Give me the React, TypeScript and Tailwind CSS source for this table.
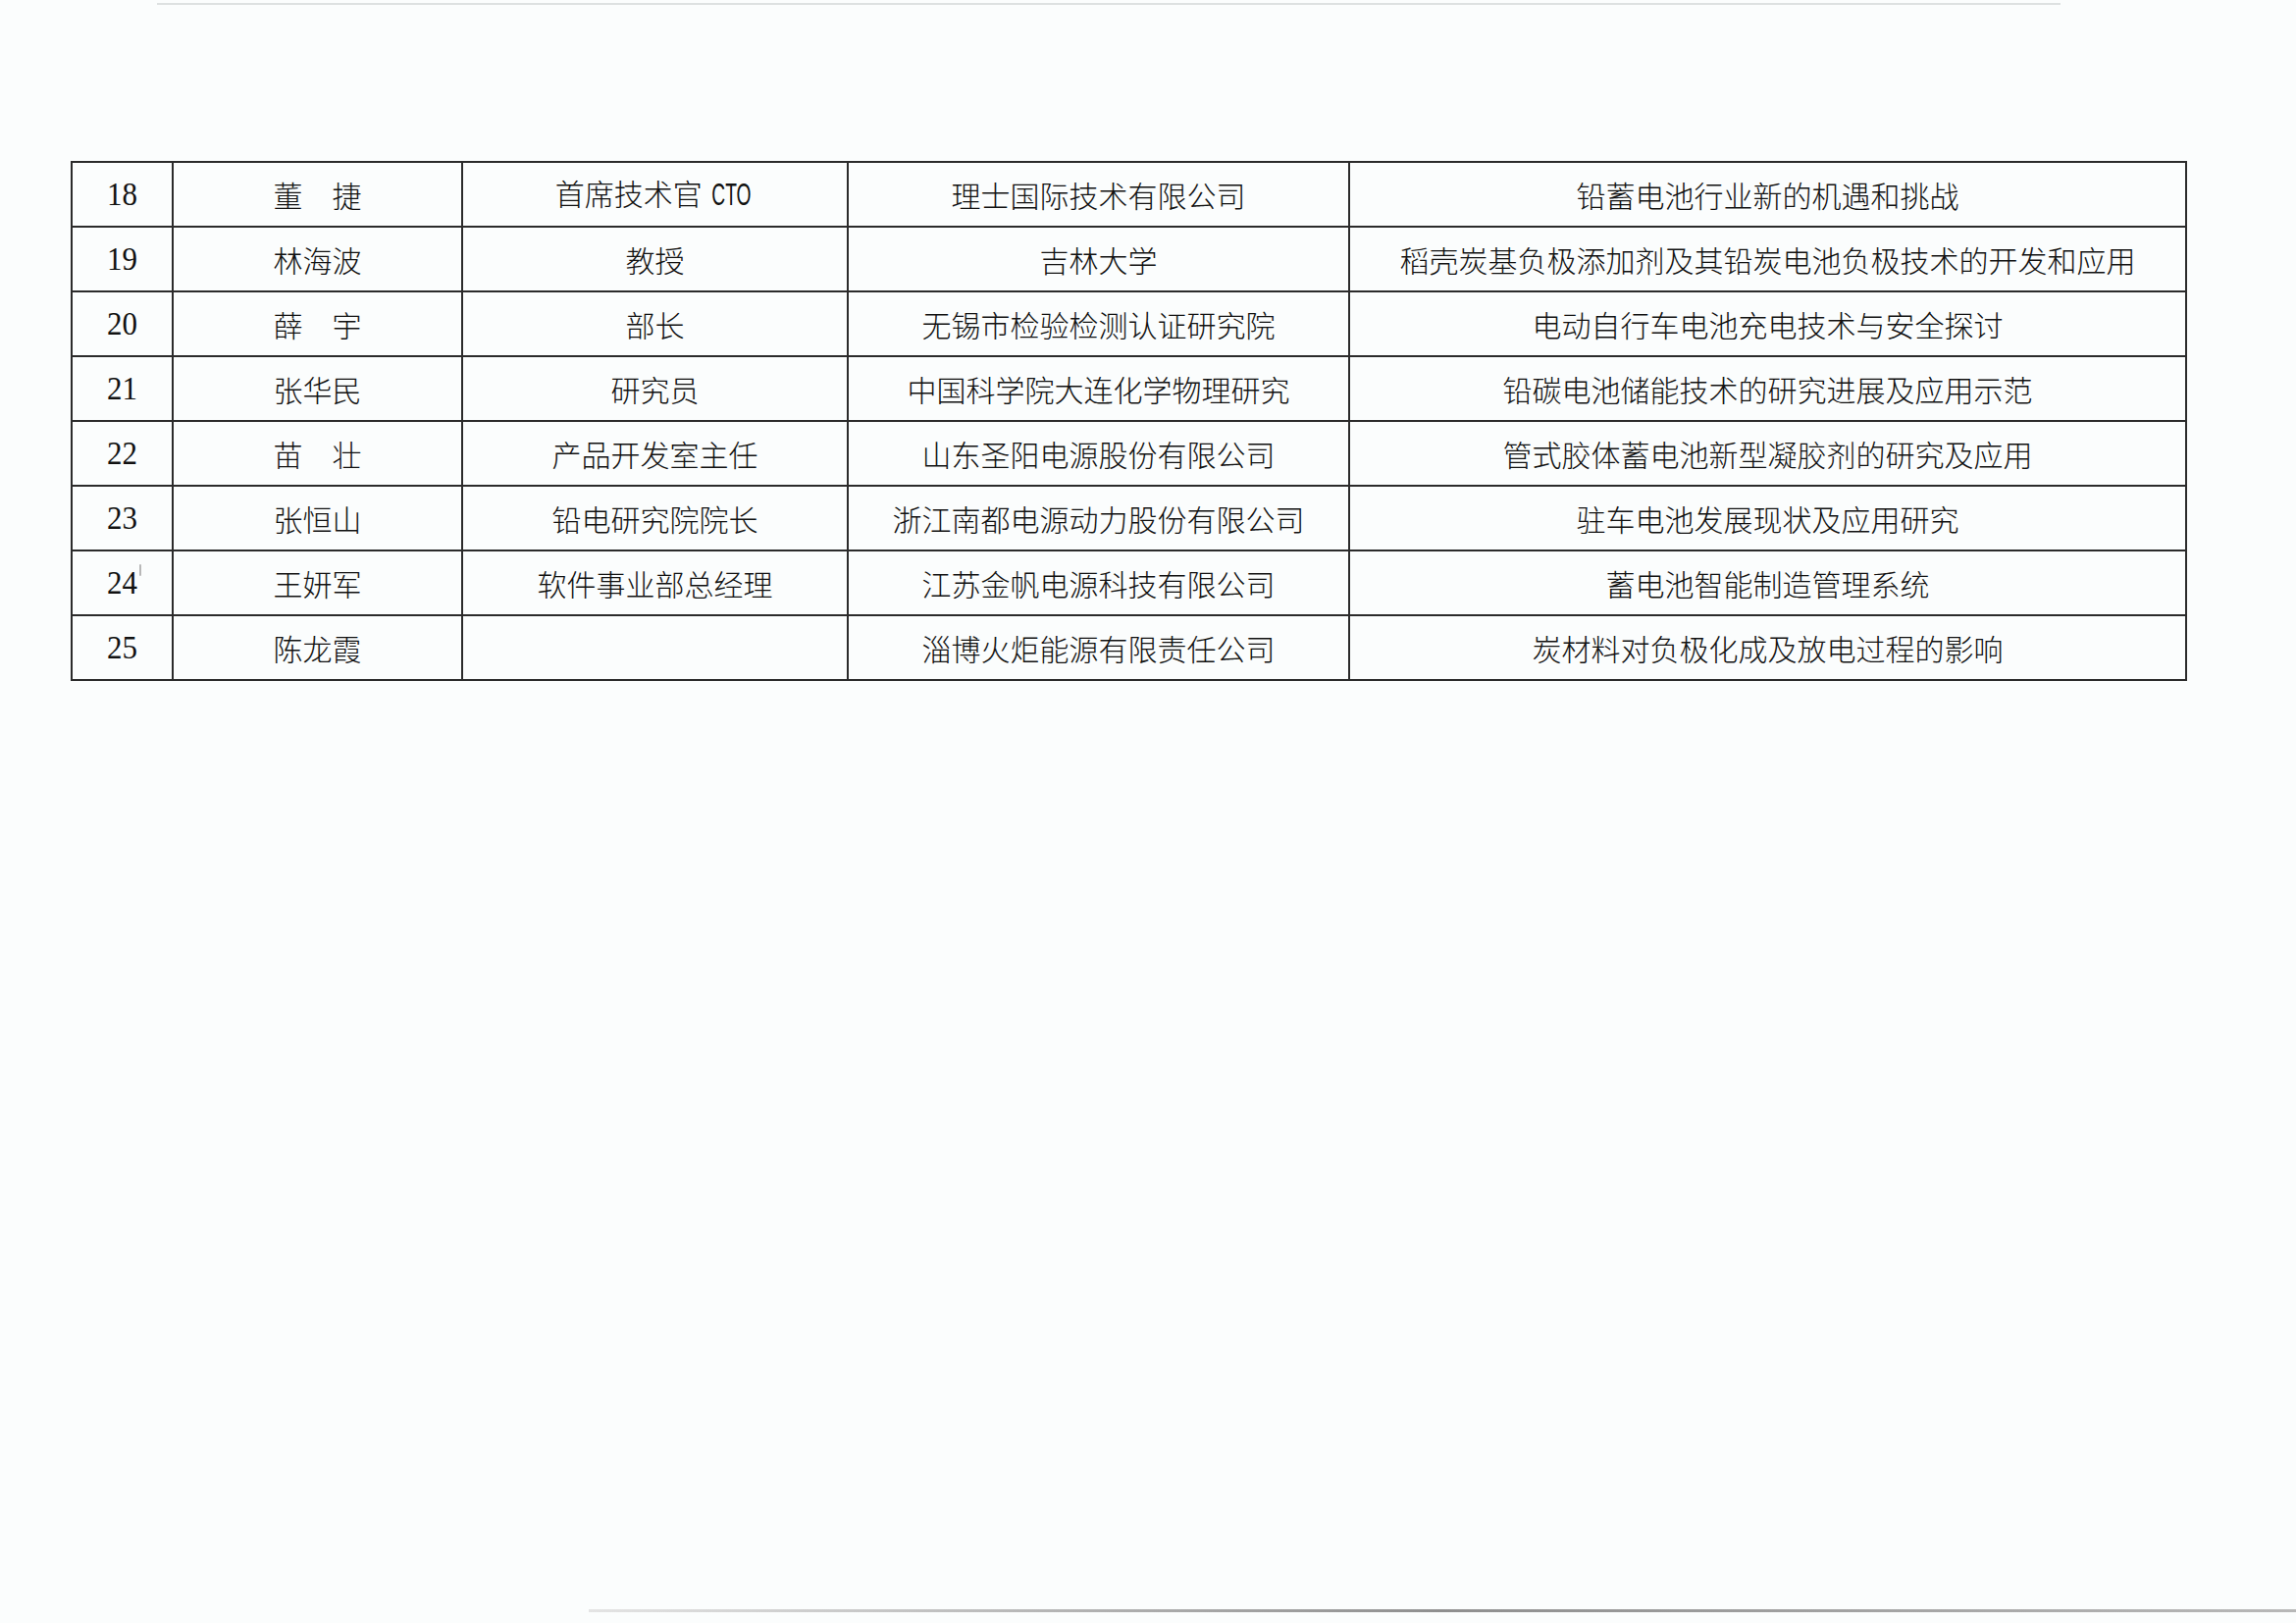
import React from 'react';

type Row = {
  no: string;
  name: string;
  title: React.ReactNode;
  org: string;
  topic: string;
};

const rows: Row[] = [
  { no: '18', name: '董\u3000捷', title: <>首席技术官 <span className="inline-block scale-x-[0.62] -mx-[9px] font-['Liberation_Sans',sans-serif] text-[31px] font-normal">CTO</span></>, org: '理士国际技术有限公司', topic: '铅蓄电池行业新的机遇和挑战' },
  { no: '19', name: '林海波', title: '教授', org: '吉林大学', topic: '稻壳炭基负极添加剂及其铅炭电池负极技术的开发和应用' },
  { no: '20', name: '薛\u3000宇', title: '部长', org: '无锡市检验检测认证研究院', topic: '电动自行车电池充电技术与安全探讨' },
  { no: '21', name: '张华民', title: '研究员', org: '中国科学院大连化学物理研究', topic: '铅碳电池储能技术的研究进展及应用示范' },
  { no: '22', name: '苗\u3000壮', title: '产品开发室主任', org: '山东圣阳电源股份有限公司', topic: '管式胶体蓄电池新型凝胶剂的研究及应用' },
  { no: '23', name: '张恒山', title: '铅电研究院院长', org: '浙江南都电源动力股份有限公司', topic: '驻车电池发展现状及应用研究' },
  { no: '24', name: '王妍军', title: '软件事业部总经理', org: '江苏金帆电源科技有限公司', topic: '蓄电池智能制造管理系统' },
  { no: '25', name: '陈龙霞', title: '', org: '淄博火炬能源有限责任公司', topic: '炭材料对负极化成及放电过程的影响' },
];

const cell = 'border-2 border-[#2b2b2b] text-center align-middle p-0';

export default function App() {
  return (
    <div className="w-full h-[1654px] bg-[#fbfdfd] flex flex-col overflow-hidden font-['Noto_Sans_CJK_SC',sans-serif] text-[#111]">
      {/* scanner edge mark at the top */}
      <div className="mt-[3px] ml-[160px] w-[1940px] h-[2px] bg-[#dde1e1] shrink-0" />

      <div className="pt-[159px] pl-[72px]">
        <table className="border-collapse table-fixed w-[2155px]">
          <colgroup>
            <col className="w-[103px]" />
            <col className="w-[295px]" />
            <col className="w-[393px]" />
            <col className="w-[511px]" />
            <col className="w-[853px]" />
          </colgroup>
          <tbody>
            {rows.map((r) => (
              <tr key={r.no} className="h-[66px]">
                <td className={`${cell} font-['Liberation_Serif',serif] text-[31px]`}>
                  <span className="inline-block scale-y-110">{r.no}</span>
                  {r.no === '24' && (
                    <span className="inline-block align-top mt-[4px] -mr-[4px] ml-[2px] w-[2px] h-[12px] bg-[#b8b8b8] rounded" />
                  )}
                </td>
                <td className={`${cell} text-[30px] font-light`}>{r.name}</td>
                <td className={`${cell} text-[30px] font-light`}>{r.title}</td>
                <td className={`${cell} text-[30px] font-light`}>{r.org}</td>
                <td className={`${cell} text-[30px] font-light`}>{r.topic}</td>
              </tr>
            ))}
          </tbody>
        </table>
      </div>

      <div className="flex-1" />
      {/* scanner edge mark at the bottom */}
      <div className="mb-[11px] ml-[600px] h-[3px] bg-gradient-to-r from-[#e4e4e4] via-[#8f8f8f] to-[#b8b8b8] shrink-0" />
    </div>
  );
}
